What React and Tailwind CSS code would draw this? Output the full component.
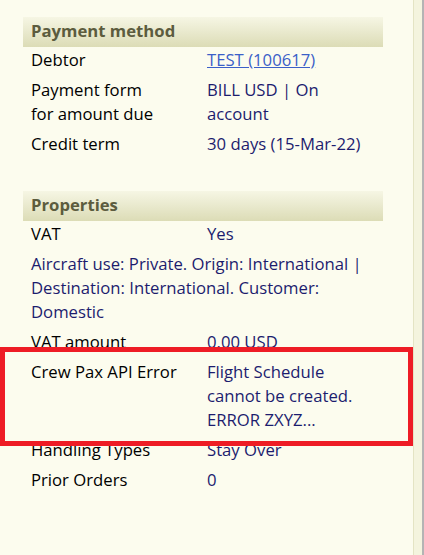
export default function App() {
  const font = { fontFamily: '"Open Sans", "Noto Sans", sans-serif' };

  const Row = ({ label, children, full }) =>
    full ? (
      <div className="px-2 pt-[1px] pb-[5px] leading-6 text-[#1c1c6e]">{children}</div>
    ) : (
      <div className="flex px-2 pt-[1px] pb-[5px] leading-6">
        <div className="w-[176px] shrink-0 text-black">{label}</div>
        <div className="flex-1 text-[#1c1c6e]">{children}</div>
      </div>
    );

  const Header = ({ children }) => (
    <div className="h-[30px] px-2 pb-[3px] flex items-center bg-gradient-to-b from-[#f6f6e4] to-[#dcdcb6] text-[#5c5c3e] font-bold">
      {children}
    </div>
  );

  return (
    <div className="relative flex h-[555px] w-[424px] overflow-hidden bg-[#fcfcee] text-[16.7px]" style={font}>
      <div className="w-[413px] shrink-0 pt-[17px] pl-[23px] pr-[30px]">
        <Header>Payment method</Header>
        <Row label="Debtor">
          <a href="#" className="text-[#3b5fc8] underline">TEST (100617)</a>
        </Row>
        <Row label={<>Payment form<br />for amount due</>}>BILL USD | On account</Row>
        <Row label="Credit term">30 days (15-Mar-22)</Row>

        <div className="h-[30px]" />

        <Header>Properties</Header>
        <Row label="VAT">Yes</Row>
        <Row full>
          Aircraft use: Private. Origin: International | Destination: International. Customer: Domestic
        </Row>
        <Row label="VAT amount">0.00 USD</Row>
        <Row label="Crew Pax API Error">Flight Schedule cannot be created. ERROR ZXYZ...</Row>
        <Row label="Handling Types">Stay Over</Row>
        <Row label="Prior Orders">0</Row>
      </div>
      <div className="w-px bg-[#e4e4c4]" />
      <div className="w-[8px] bg-[#f4f4de]" />
      <div className="flex-1 bg-[#b4b4b4]" />

      <div className="absolute left-0 top-[347px] w-[413px] h-[99px] border-[5px] border-[#ee1c25]" />
    </div>
  );
}
